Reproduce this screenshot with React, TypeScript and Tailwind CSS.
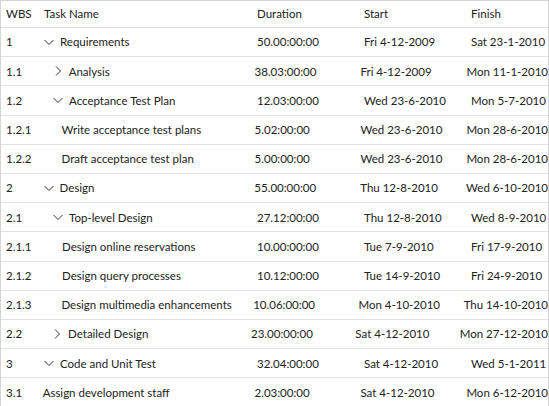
const rows: [string, string, number, string, string, string, string][] = [
  ["1", "Requirements", 43, "down", "50.00:00:00", "Fri 4-12-2009", "Sat 23-1-2010"],
  ["1.1", "Analysis", 53, "right", "38.03:00:00", "Fri 4-12-2009", "Mon 11-1-2010"],
  ["1.2", "Acceptance Test Plan", 53, "down", "12.03:00:00", "Wed 23-6-2010", "Mon 5-7-2010"],
  ["1.2.1", "Write acceptance test plans", 63, "", "5.02:00:00", "Wed 23-6-2010", "Mon 28-6-2010"],
  ["1.2.2", "Draft acceptance test plan", 63, "", "5.00:00:00", "Wed 23-6-2010", "Mon 28-6-2010"],
  ["2", "Design", 43, "down", "55.00:00:00", "Thu 12-8-2010", "Wed 6-10-2010"],
  ["2.1", "Top-level Design", 53, "down", "27.12:00:00", "Thu 12-8-2010", "Wed 8-9-2010"],
  ["2.1.1", "Design online reservations", 63, "", "10.00:00:00", "Tue 7-9-2010", "Fri 17-9-2010"],
  ["2.1.2", "Design query processes", 63, "", "10.12:00:00", "Tue 14-9-2010", "Fri 24-9-2010"],
  ["2.1.3", "Design multimedia enhancements", 63, "", "10.06:00:00", "Mon 4-10-2010", "Thu 14-10-2010"],
  ["2.2", "Detailed Design", 53, "right", "23.00:00:00", "Sat 4-12-2010", "Mon 27-12-2010"],
  ["3", "Code and Unit Test", 43, "down", "32.04:00:00", "Sat 4-12-2010", "Wed 5-1-2011"],
  ["3.1", "Assign development staff", 43, "", "2.03:00:00", "Sat 4-12-2010", "Mon 6-12-2010"],
];

function Chevron({ dir }: { dir: string }) {
  return (
    <svg width="12" height="12" viewBox="0 0 12 12" className="shrink-0" fill="none" stroke="#333" strokeWidth="1">
      {dir === "down" ? <path d="M1.5 4 L6 8.5 L10.5 4" /> : <path d="M4 1.5 L8.5 6 L4 10.5" />}
    </svg>
  );
}

export default function App() {
  return (
    <div
      className="w-[549px] h-[406px] bg-white text-[11.5px] text-[#222] border-l border-r border-t border-[#d5d5d5] overflow-hidden"
      style={{ fontFamily: "Lato, 'Noto Sans', sans-serif" }}
    >
      <div className="flex h-[27px] items-center border-b border-[#dcdcdc]">
        <div className="w-[42px] pl-[5px]">WBS</div>
        <div className="w-[214px] pl-[1px]">Task Name</div>
        <div className="w-[107px]">Duration</div>
        <div className="w-[107px]">Start</div>
        <div>Finish</div>
      </div>
      {rows.map(([wbs, name, x, dir, dur, start, fin]) => (
        <div key={wbs} className="flex h-[29.2px] items-center border-b border-[#e3e3e3]">
          <div className="w-[42px] pl-[5px]">{wbs}</div>
          <div className="w-[214px] flex items-center gap-[5px]" style={{ paddingLeft: x - 43 - 1 }}>
            {dir && <Chevron dir={dir} />}
            <span>{name}</span>
          </div>
          <div className="w-[107px]">{dur}</div>
          <div className="w-[107px]">{start}</div>
          <div className="whitespace-nowrap">{fin}</div>
        </div>
      ))}
    </div>
  );
}
